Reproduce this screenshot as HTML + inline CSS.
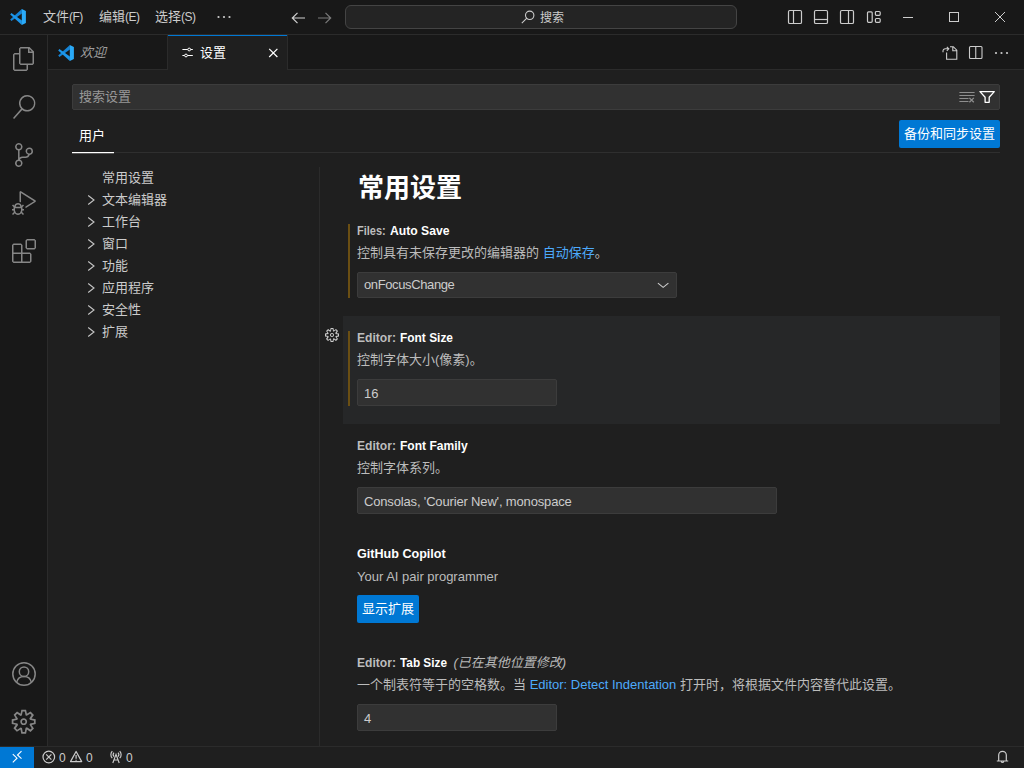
<!DOCTYPE html>
<html lang="zh-CN">
<head>
<meta charset="utf-8">
<title>设置 - Visual Studio Code</title>
<style>
*{box-sizing:border-box;margin:0;padding:0}
html,body{width:1024px;height:768px;overflow:hidden;background:#1f1f1f;}
body{font-family:"Liberation Sans","Noto Sans CJK SC",sans-serif;font-size:13px;color:#ccc;position:relative;}
.abs{position:absolute}
#titlebar{position:absolute;left:0;top:0;width:1024px;height:35px;background:#181818;border-bottom:1px solid #2b2b2b;}
#activity{position:absolute;left:0;top:35px;width:48px;height:711px;background:#181818;border-right:1px solid #2b2b2b;}
#tabs{position:absolute;left:48px;top:35px;width:976px;height:35px;background:#181818;border-bottom:1px solid #2b2b2b;}
#status{position:absolute;left:0;top:746px;width:1024px;height:22px;background:#1f1f1f;border-top:1px solid #2b2b2b;font-size:12px;}
.menu{position:absolute;top:0;height:34px;line-height:34px;font-size:13px;color:#ccc;white-space:nowrap}
.lt{letter-spacing:-0.5px;font-size:12px}
.tab{position:absolute;top:0;height:35px;line-height:35px;font-size:13px;white-space:nowrap}
#search{position:absolute;left:345px;top:5px;width:392px;height:24px;background:#242424;border:1px solid #444;border-radius:6px;}
.t{position:absolute;white-space:nowrap;line-height:1}
.toc{position:absolute;left:102px;font-size:13px;color:#ccc;white-space:nowrap;line-height:22px;height:22px}
.chev{position:absolute;left:86px;width:12px;height:12px}
.lbl{position:absolute;left:357px;font-size:13px;font-weight:bold;white-space:nowrap;line-height:18px;color:#fff}
.lb{position:absolute;font-size:13px;font-weight:bold;white-space:nowrap;line-height:18px;color:#fff;transform-origin:0 50%}
.lb.cat{color:#bdbdbd}
.lb.ov{font-weight:normal;font-style:italic;color:#b8b8b8}
.desc{position:absolute;left:357px;font-size:13px;white-space:nowrap;line-height:18px;color:#bcbcbc}
.desc a,.lnk{color:#4daafc;text-decoration:none}
.inp{position:absolute;left:357px;height:26px;background:#313131;border:1px solid #3c3c3c;border-radius:2px;font-size:13px;line-height:24px;padding-left:6px;color:#ccc;white-space:nowrap}
.ti{height:27px;line-height:27px}
.btn{position:absolute;background:#0078d4;color:#fff;border-radius:2px;font-size:13px;text-align:center;white-space:nowrap}
.mod{position:absolute;left:348px;width:2px;background:#6b4f13}
svg{position:absolute;overflow:visible}
</style>
</head>
<body>
<div id="titlebar">
<svg style="left:10px;top:9px" width="16" height="16" viewBox="0 0 16 16"><polygon points="0.2,10.5 1.4,12 11.9,4.500 11.9,0" fill="#1584d6"/><polygon points="0.2,5.500 1.4,4 11.9,11.500 11.9,16" fill="#1c96ea"/><polygon points="11.8,0 15.9,2 15.9,14 11.8,16" fill="#2aaaf8"/></svg>
<div class="menu" style="left:43px">文件<span class="lt">(F)</span></div>
<div class="menu" style="left:99px">编辑<span class="lt">(E)</span></div>
<div class="menu" style="left:155px">选择<span class="lt">(S)</span></div>
<svg style="left:216px;top:9.300px" width="16" height="16" viewBox="0 0 16 16" fill="#ccc"><circle cx="2.500" cy="8" r="1.100"/><circle cx="8" cy="8" r="1.100"/><circle cx="13.500" cy="8" r="1.100"/></svg>
<svg style="left:290px;top:9.600px" width="16" height="16" viewBox="0 0 16 16" fill="none" stroke="#d0d0d0" stroke-width="1.200"><path d="M15 8H2.5M7.5 2.8L2.3 8l5.2 5.2"/></svg>
<svg style="left:317px;top:9.600px" width="16" height="16" viewBox="0 0 16 16" fill="none" stroke="#7a7a7a" stroke-width="1.200"><path d="M1 8h12.5M8.5 2.8L13.7 8l-5.2 5.2"/></svg>
<div id="search"></div>
<svg style="left:521px;top:10px" width="14" height="14" viewBox="0 0 14 14" fill="none" stroke="#ccc" stroke-width="1.1"><circle cx="8.7" cy="5.3" r="4.2"/><path d="M5.8 8.2L0.8 13.2"/></svg>
<div class="t" style="left:540px;top:0;height:34px;line-height:36px;font-size:12px;color:#ccc">搜索</div>
<svg style="left:787px;top:9px" width="16" height="16" viewBox="0 0 16 16" fill="none" stroke="#ccc" stroke-width="1.200"><rect x="1.500" y="1.500" width="13" height="13" rx="1.300"/><path d="M6.5 1.5v13"/></svg>
<svg style="left:813px;top:9px" width="16" height="16" viewBox="0 0 16 16" fill="none" stroke="#ccc" stroke-width="1.200"><rect x="1.500" y="1.500" width="13" height="13" rx="1.300"/><path d="M1.5 10.5h13"/></svg>
<svg style="left:839px;top:9px" width="16" height="16" viewBox="0 0 16 16" fill="none" stroke="#ccc" stroke-width="1.200"><rect x="1.500" y="1.500" width="13" height="13" rx="1.300"/><path d="M9.5 1.5v13"/></svg>
<svg style="left:865px;top:9px" width="16" height="16" viewBox="0 0 16 16" fill="none" stroke="#ccc" stroke-width="1.200"><rect x="2.500" y="2.800" width="4.700" height="10.500" rx="1"/><rect x="10.400" y="2.500" width="4.800" height="3.800" rx="1"/><rect x="10.400" y="9.500" width="4.800" height="3.800" rx="1"/></svg>
<svg style="left:903px;top:12px" width="10" height="10" viewBox="0 0 10 10" stroke="#ccc" stroke-width="1"><path d="M0 5.5h10"/></svg>
<svg style="left:949px;top:12px" width="10" height="10" viewBox="0 0 10 10" fill="none" stroke="#ccc" stroke-width="1"><rect x="0.5" y="0.5" width="9" height="9"/></svg>
<svg style="left:995px;top:12px" width="10" height="10" viewBox="0 0 10 10" fill="none" stroke="#ccc" stroke-width="1"><path d="M0 0l10 10M10 0L0 10"/></svg>
</div>
<div id="activity">
<svg style="left:12px;top:12px" width="24" height="24" viewBox="0 0 24 24" fill="#868686"><path d="M17.5 0h-9L7 1.5V6H2.5L1 7.500v15.070L2.500 24h12.070L16 22.570V18h4.700l1.300-1.430V4.500L17.500 0zm0 2.120l2.380 2.380H17.500V2.120zm-3 20.380h-12v-15H7v9.070L8.500 18h6v4.500zm6-6h-12v-15H16V6h4.500v10.500z"/></svg>
<svg style="left:12px;top:60px" width="24" height="24" viewBox="0 0 24 24" fill="#868686"><path d="M15.250 0a8.250 8.250 0 0 0-6.180 13.720L1 22.880l1.120 1.120 8.050-9.120A8.251 8.251 0 1 0 15.250.010V0zm0 15a6.750 6.750 0 1 1 0-13.500 6.750 6.750 0 0 1 0 13.500z"/></svg>
<svg style="left:12px;top:108px" width="24" height="24" viewBox="0 0 24 24" fill="#868686"><path d="M21.007 8.222A3.738 3.738 0 0 0 15.045 5.200a3.737 3.737 0 0 0 1.156 6.583 2.988 2.988 0 0 1-2.668 1.670h-2.990a4.456 4.456 0 0 0-2.989 1.165V7.400a3.737 3.737 0 1 0-1.494 0v9.117a3.776 3.776 0 1 0 1.816.099 2.990 2.990 0 0 1 2.668-1.667h2.990a4.484 4.484 0 0 0 4.223-3.039 3.736 3.736 0 0 0 3.250-3.687zM4.565 3.738a2.242 2.242 0 1 1 4.484 0 2.242 2.242 0 0 1-4.484 0zm4.484 16.441a2.242 2.242 0 1 1-4.484 0 2.242 2.242 0 0 1 4.484 0zm8.221-9.715a2.242 2.242 0 1 1 0-4.485 2.242 2.242 0 0 1 0 4.485z"/></svg>
<svg style="left:12px;top:156px" width="24" height="24" viewBox="0 0 24 24" fill="#868686"><path d="M10.940 13.500l-1.320 1.320a3.730 3.730 0 0 0-7.240 0L1.060 13.500 0 14.560l1.720 1.720-.22.220V18H0v1.500h1.500v.080c.077.489.214.966.410 1.420L0 22.940 1.060 24l1.650-1.650A4.308 4.308 0 0 0 6 24a4.310 4.310 0 0 0 3.290-1.650L10.940 24 12 22.940 10.090 21c.198-.464.336-.951.410-1.450v-.100H12V18h-1.500v-1.500l-.22-.220L12 14.560l-1.060-1.060zM6 13.500a2.250 2.250 0 0 1 2.250 2.250h-4.500A2.250 2.250 0 0 1 6 13.500zm3 6a3.330 3.330 0 0 1-3 3 3.330 3.330 0 0 1-3-3v-2.250h6v2.250zm14.760-9.900v1.260L13.500 17.370V15.600l8.500-5.370L9 2v9.460a5.070 5.070 0 0 0-1.500-.720V.630L8.640 0l15.120 9.600z"/></svg>
<svg style="left:12px;top:204px" width="24" height="24" viewBox="0 0 24 24" fill="#868686"><path d="M13.500 1.500L15 0h7.500L24 1.500V9l-1.500 1.500H15L13.500 9V1.500zm1.500 0V9h7.500V1.500H15zM0 15V6l1.500-1.500H9L10.500 6v7.500H18l1.500 1.500v7.500L18 24H1.500L0 22.500V15zm9-1.500V6H1.500v7.500H9zM9 15H1.500v7.500H9V15zm1.500 7.500H18V15h-7.500v7.500z"/></svg>
<svg style="left:12px;top:627px" width="24" height="24" viewBox="0 0 24 24" fill="none" stroke="#868686" stroke-width="1.5"><circle cx="12" cy="12" r="11.2"/><circle cx="12" cy="9.700" r="4.700"/><path d="M4.600 20.300a7.600 7.600 0 0 1 14.800 0"/></svg>
<svg style="left:10.300px;top:673.300px" width="27.400" height="27.400" viewBox="0 0 16 16" fill="#868686"><path fill-rule="evenodd" d="M9.100 4.400L8.600 2H7.400l-.5 2.400-.7.300-2-1.300-.9.800 1.300 2-.2.700-2.400.5v1.200l2.400.5.300.8-1.300 2 .8.800 2-1.300.8.300.4 2.300h1.200l.5-2.400.8-.3 2 1.300.8-.8-1.300-2 .3-.8 2.300-.4V7.400l-2.400-.5-.3-.8 1.300-2-.8-.8-2 1.300-.7-.2zM9.400 1l.5 2.400L12 2.100l2 2-1.400 2.100 2.400.4v2.800l-2.400.5L14 12l-2 2-2.100-1.400-.5 2.400H6.600l-.5-2.400L4 13.900l-2-2 1.400-2.100L1 9.400V6.600l2.400-.5L2.100 4l2-2 2.100 1.400.4-2.400h2.800zm.6 7c0 1.100-.9 2-2 2s-2-.9-2-2 .9-2 2-2 2 .9 2 2zM8 9c.6 0 1-.4 1-1s-.4-1-1-1-1 .4-1 1 .4 1 1 1z"/></svg>
</div>
<div id="tabs">
<div class="abs" style="left:0;top:0;width:120px;height:34px;background:#181818;border-right:1px solid #2b2b2b"></div>
<svg style="left:10px;top:10px" width="16" height="16" viewBox="0 0 16 16"><polygon points="0.2,10.5 1.4,12 11.9,4.500 11.9,0" fill="#1584d6"/><polygon points="0.2,5.500 1.4,4 11.9,11.500 11.9,16" fill="#1c96ea"/><polygon points="11.8,0 15.9,2 15.9,14 11.8,16" fill="#2aaaf8"/></svg>
<div class="tab" style="left:32px;color:#9d9d9d;font-style:italic">欢迎</div>
<div class="abs" style="left:120px;top:0;width:119px;height:35px;background:#1f1f1f;border-top:1px solid #0078d4"></div><div class="abs" style="left:239px;top:0;width:1px;height:35px;background:#2b2b2b"></div>
<svg style="left:132px;top:10px" width="16" height="16" viewBox="0 0 16 16" fill="none" stroke="#fff" stroke-width="1"><path d="M2.400 4.500h5.300M10.700 4.500h2.100M2.400 10.500h2.100M7.500 10.500h5.300"/><circle cx="9.200" cy="4.500" r="1.400"/><circle cx="6" cy="10.500" r="1.400"/></svg>
<div class="tab" style="left:152px;color:#fff">设置</div>
<svg style="left:220px;top:13px" width="10" height="10" viewBox="0 0 10 10" fill="none" stroke="#fff" stroke-width="1.2"><path d="M1.200 0.800l8.200 8.200M9.400 0.800L1.200 9"/></svg>
<svg style="left:894px;top:10px" width="16" height="16" viewBox="0 0 16 16" fill="none" stroke="#ccc" stroke-width="1.1"><path d="M4.600 7.500v6.800h10.200V5.200L11.300 1.700H8M10.800 1.700v4h4"/><path d="M1 7.300V6a2.200 2.200 0 0 1 2.200-2.200h3.300M4.800 1.800l2 2-2 2"/></svg>
<svg style="left:920px;top:10px" width="16" height="16" viewBox="0 0 16 16" fill="none" stroke="#ccc" stroke-width="1.1"><rect x="1.500" y="1.500" width="12.500" height="12" rx="1"/><path d="M7.750 1.500v12"/></svg>
<svg style="left:946px;top:10px" width="16" height="16" viewBox="0 0 16 16" fill="#ccc"><circle cx="2" cy="8" r="1.100"/><circle cx="7.500" cy="8" r="1.100"/><circle cx="13" cy="8" r="1.100"/></svg>
</div>
<div id="main">
<div class="abs" style="left:72px;top:84px;width:928px;height:26px;background:#313131;border:1px solid #3c3c3c;border-radius:2px"></div>
<div class="t" style="left:79px;top:84px;height:26px;line-height:26px;font-size:13px;color:#989898">搜索设置</div>
<svg style="left:959px;top:90px" width="16" height="16" viewBox="0 0 16 16" fill="none" stroke="#8e8e8e" stroke-width="1"><path d="M0.400 2.500h15.200M0.400 5.500h15.200M0.400 8.500h9.100M0.400 11.500h9.100"/><path d="M10.400 7.900l4.400 4.400M14.800 7.900l-4.400 4.400" stroke-width="1.300"/></svg>
<svg style="left:979px;top:90px" width="17" height="16" viewBox="0 0 17 16" fill="none" stroke="#fff" stroke-width="1.300"><path d="M1 1.600h14.300L10.200 7.200v5.100H6.100V7.200z" stroke-linejoin="round"/></svg>
<div class="t" style="left:79px;top:123px;height:26px;line-height:26px;font-size:13px;color:#fff">用户</div>
<div class="abs" style="left:72px;top:152px;width:928px;height:1px;background:#2f2f2f"></div>
<div class="abs" style="left:72px;top:152px;width:42px;height:1px;background:#fff"></div><div class="abs" style="left:72px;top:153px;width:42px;height:1px;background:rgba(255,255,255,.25)"></div>
<div class="btn" style="left:899px;top:120px;width:101px;height:28px;line-height:28px">备份和同步设置</div>
<div class="toc" style="top:167px">常用设置</div>
<svg class="chev" style="top:194px" viewBox="0 0 12 12" fill="none" stroke="#c5c5c5" stroke-width="1.100"><path d="M2.200 1.500L8 6 2.200 10.500"/></svg>
<div class="toc" style="top:189px">文本编辑器</div>
<svg class="chev" style="top:216px" viewBox="0 0 12 12" fill="none" stroke="#c5c5c5" stroke-width="1.100"><path d="M2.200 1.500L8 6 2.200 10.500"/></svg>
<div class="toc" style="top:211px">工作台</div>
<svg class="chev" style="top:238px" viewBox="0 0 12 12" fill="none" stroke="#c5c5c5" stroke-width="1.100"><path d="M2.200 1.500L8 6 2.200 10.500"/></svg>
<div class="toc" style="top:233px">窗口</div>
<svg class="chev" style="top:260px" viewBox="0 0 12 12" fill="none" stroke="#c5c5c5" stroke-width="1.100"><path d="M2.200 1.500L8 6 2.200 10.500"/></svg>
<div class="toc" style="top:255px">功能</div>
<svg class="chev" style="top:282px" viewBox="0 0 12 12" fill="none" stroke="#c5c5c5" stroke-width="1.100"><path d="M2.200 1.500L8 6 2.200 10.500"/></svg>
<div class="toc" style="top:277px">应用程序</div>
<svg class="chev" style="top:304px" viewBox="0 0 12 12" fill="none" stroke="#c5c5c5" stroke-width="1.100"><path d="M2.200 1.500L8 6 2.200 10.500"/></svg>
<div class="toc" style="top:299px">安全性</div>
<svg class="chev" style="top:326px" viewBox="0 0 12 12" fill="none" stroke="#c5c5c5" stroke-width="1.100"><path d="M2.200 1.500L8 6 2.200 10.500"/></svg>
<div class="toc" style="top:321px">扩展</div>

<div class="abs" style="left:319px;top:167px;width:1px;height:579px;background:#2b2b2b"></div>
<div class="abs" style="left:343px;top:316px;width:657px;height:108px;background:#262728"></div>
<div class="t" style="left:358px;top:171px;height:34px;line-height:34px;font-size:26px;font-weight:bold;color:#fff">常用设置</div>

<div class="mod" style="top:224px;height:74px"></div>
<span class="lb cat" id="c1" style="left:357px;top:222px;transform:scaleX(0.845)">Files:</span><span class="lb nm" id="n1" style="left:389.7px;top:222px;transform:scaleX(0.936)">Auto Save</span>
<div class="desc" style="top:244px">控制具有未保存更改的编辑器的 <a>自动保存</a>。</div>
<div class="inp" style="top:272px;width:320px;letter-spacing:-0.380px">onFocusChange</div>
<svg style="left:657px;top:279px" width="12" height="12" viewBox="0 0 12 12" fill="none" stroke="#ccc" stroke-width="1.100"><path d="M0.900 4.100L6.150 8.400 11.400 4.100"/></svg>

<svg style="left:324px;top:327px" width="16" height="16" viewBox="0 0 16 16" fill="#ccc"><path fill-rule="evenodd" d="M9.100 4.400L8.600 2H7.400l-.5 2.400-.7.300-2-1.300-.9.800 1.300 2-.2.700-2.400.5v1.200l2.400.5.300.8-1.300 2 .8.800 2-1.300.8.300.4 2.300h1.200l.5-2.400.8-.3 2 1.300.8-.8-1.300-2 .3-.8 2.300-.4V7.400l-2.400-.5-.3-.8 1.300-2-.8-.8-2 1.300-.7-.2zM9.400 1l.5 2.400L12 2.100l2 2-1.400 2.100 2.400.4v2.800l-2.400.5L14 12l-2 2-2.100-1.400-.5 2.400H6.600l-.5-2.400L4 13.900l-2-2 1.400-2.100L1 9.400V6.600l2.400-.5L2.100 4l2-2 2.100 1.400.4-2.400h2.800zm.6 7c0 1.100-.9 2-2 2s-2-.9-2-2 .9-2 2-2 2 .9 2 2zM8 9c.6 0 1-.4 1-1s-.4-1-1-1-1 .4-1 1 .4 1 1 1z"/></svg>
<div class="mod" style="top:331px;height:75px"></div>
<span class="lb cat" id="c2" style="left:357px;top:329px;transform:scaleX(0.931)">Editor:</span><span class="lb nm" id="n2" style="left:400px;top:329px;transform:scaleX(0.917)">Font Size</span>
<div class="desc" style="top:351px">控制字体大小(像素)。</div>
<div class="inp ti" style="top:379px;width:200px">16</div>

<span class="lb cat" id="c3" style="left:357px;top:437px;transform:scaleX(0.931)">Editor:</span><span class="lb nm" id="n3" style="left:400px;top:437px;transform:scaleX(0.927)">Font Family</span>
<div class="desc" style="top:459px">控制字体系列。</div>
<div class="inp ti" style="top:487px;width:420px;letter-spacing:-0.160px">Consolas, 'Courier New', monospace</div>

<span class="lb nm" id="n4" style="left:357px;top:545px;transform:scaleX(0.967)">GitHub Copilot</span>
<div class="desc" style="top:568px">Your AI pair programmer</div>
<div class="btn" style="left:357px;top:595px;width:62px;height:28px;line-height:28px">显示扩展</div>

<span class="lb cat" id="c5" style="left:357px;top:654px;transform:scaleX(0.931)">Editor:</span><span class="lb nm" id="n5" style="left:400px;top:654px;transform:scaleX(0.907)">Tab Size</span><span class="lb ov" id="o5" style="left:453.5px;top:654px;transform:scaleX(1)">(已在其他位置修改)</span>
<div class="desc" style="top:676px">一个制表符等于的空格数。当 <a>Editor: Detect Indentation</a> 打开时，将根据文件内容替代此设置。</div>
<div class="inp ti" style="top:704px;width:200px">4</div>
</div>
<div id="status">
<div class="abs" style="left:0;top:0;width:34px;height:21px;background:#0078d4"></div>
<svg style="left:10px;top:3px" width="14" height="14" viewBox="0 0 14 14" fill="none" stroke="#fff" stroke-width="1.100"><path d="M2.800 4.200l4.200 4-4.200 4.100M11.500 1.200l-4 3.800 4 3.600"/></svg>
<svg style="left:42px;top:3px" width="14" height="14" viewBox="0 0 14 14" fill="none" stroke="#ccc" stroke-width="1.200"><circle cx="6.800" cy="7" r="5.800"/><path d="M4.200 4.400l5.200 5.200M9.400 4.400l-5.200 5.200"/></svg>
<div class="t" style="left:59px;top:0;height:21px;line-height:23px;color:#ccc">0</div>
<svg style="left:69px;top:3px" width="14" height="14" viewBox="0 0 14 14" fill="none" stroke="#ccc" stroke-width="1.200"><path d="M7.100 1.500L12.700 11.600H1.500z" stroke-linejoin="round"/><path d="M7.100 5v3.800M7.100 9.700v1.100"/></svg>
<div class="t" style="left:86px;top:0;height:21px;line-height:23px;color:#ccc">0</div>
<svg style="left:109px;top:3px" width="14" height="14" viewBox="0 0 14 14" fill="none" stroke="#ccc" stroke-width="1.150"><path d="M3.300 1.200a5 5 0 0 0 0 7M10.700 1.200a5 5 0 0 1 0 7M5 2.700a3 3 0 0 0 0 4M9 2.700a3 3 0 0 1 0 4"/><path d="M3.800 13L7 4.300 10.200 13M5 10h4"/></svg>
<div class="t" style="left:126px;top:0;height:21px;line-height:23px;color:#ccc">0</div>
<svg style="left:996px;top:3px" width="14" height="14" viewBox="0 0 14 14" fill="none" stroke="#ccc" stroke-width="1.200"><path d="M0.800 11h11.400M2.700 11V5.100a3.800 3.800 0 0 1 7.600 0V11M5.200 11.500a1.400 1.400 0 0 0 2.600 0"/></svg>
</div>
</body>
</html>
